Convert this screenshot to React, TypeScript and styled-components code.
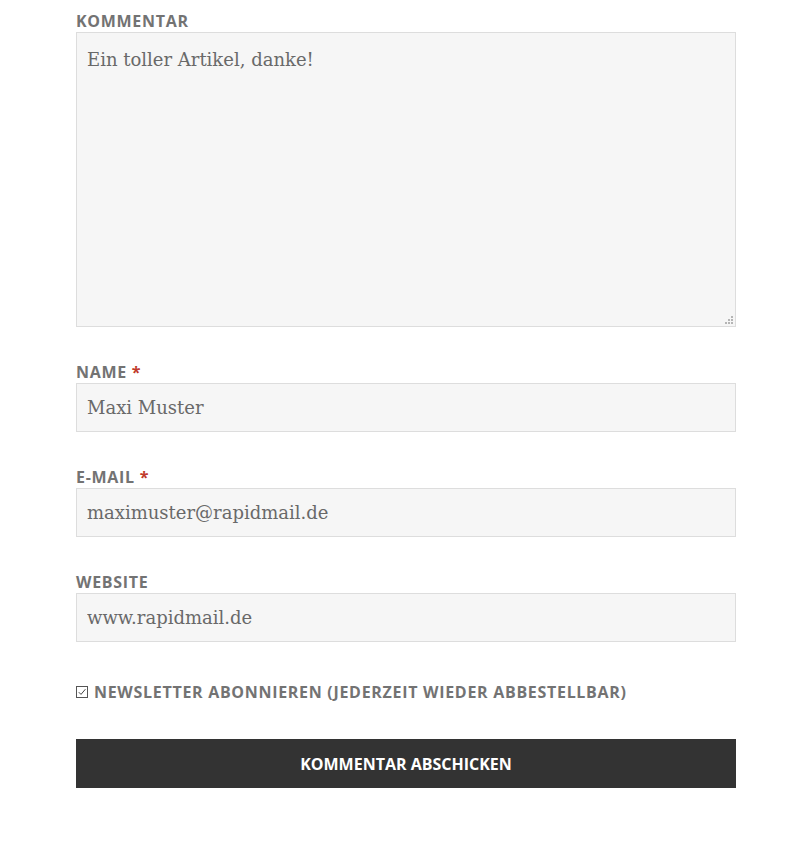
import React from "react"
import styled, { createGlobalStyle } from "styled-components"

const GlobalStyle = createGlobalStyle`
  html, body {
    margin: 0;
    padding: 0;
    background: #ffffff;
  }
`

const grip = [
  [6, 0],
  [3, 3],
  [6, 3],
  [0, 6],
  [3, 6],
  [6, 6],
]

export default function App() {
  return (
    <>
      <GlobalStyle />
      <Form onSubmit={(e) => e.preventDefault()}>
        <Field>
          <Label htmlFor="comment">Kommentar</Label>
          <AreaWrap>
            <TextArea id="comment" defaultValue="Ein toller Artikel, danke!" />
            <Grip width="8" height="8" viewBox="0 0 8 8" aria-hidden>
              {grip.map(([x, y]) => (
                <rect key={`${x}-${y}`} x={x} y={y} width="2" height="2" fill="#b5b5b5" />
              ))}
            </Grip>
          </AreaWrap>
        </Field>
        <Field>
          <Label htmlFor="author">
            Name <Required>*</Required>
          </Label>
          <Input id="author" type="text" defaultValue="Maxi Muster" />
        </Field>
        <Field>
          <Label htmlFor="email">
            E-Mail <Required>*</Required>
          </Label>
          <Input id="email" type="text" defaultValue="maximuster@rapidmail.de" />
        </Field>
        <Field>
          <Label htmlFor="url">Website</Label>
          <Input id="url" type="text" defaultValue="www.rapidmail.de" />
        </Field>
        <CheckRow>
          <CheckBox aria-hidden>
            <svg width="10" height="10" viewBox="0 0 10 10">
              <path d="M1.8 5.2 L4 7.4 L8.4 2.2" fill="none" stroke="#444" strokeWidth="1" />
            </svg>
          </CheckBox>
          <CheckLabel>Newsletter abonnieren (jederzeit wieder abbestellbar)</CheckLabel>
        </CheckRow>
        <SubmitButton type="submit">Kommentar abschicken</SubmitButton>
      </Form>
    </>
  )
}

const Form = styled.form`
  width: 660px;
  margin: 0 0 0 76px;
  padding-top: 11px;
  display: flex;
  flex-direction: column;
`
const Field = styled.div`
  display: flex;
  flex-direction: column;
  margin-bottom: 35px;
`
const Label = styled.label`
  font-family: "Open Sans", sans-serif;
  font-size: 16px;
  font-weight: 700;
  line-height: 20px;
  letter-spacing: 0.7px;
  text-transform: uppercase;
  color: #737373;
  margin-bottom: 1px;
`
const Required = styled.span`
  color: #c0392b;
`
const AreaWrap = styled.div`
  position: relative;
  display: flex;
`
const Grip = styled.svg`
  position: absolute;
  right: 3px;
  bottom: 3px;
  pointer-events: none;
`
const baseField = `
  box-sizing: border-box;
  width: 100%;
  margin: 0;
  background: #f6f6f6;
  border: 1px solid #dddddd;
  border-radius: 0;
  font-family: "DejaVu Serif", serif;
  font-size: 18px;
  color: #696969;
  outline: none;
`
const TextArea = styled.textarea`
  ${baseField}
  height: 295px;
  padding: 14px 10px 13px;
  line-height: 26px;
  resize: none;
`
const Input = styled.input`
  ${baseField}
  height: 49px;
  padding: 0 10px;
`
const CheckRow = styled.div`
  display: flex;
  align-items: center;
  gap: 6px;
  margin-top: 5px;
  margin-bottom: 37px;
`
const CheckBox = styled.span`
  box-sizing: border-box;
  width: 12px;
  height: 12px;
  border: 1px solid #555;
  display: flex;
  align-items: center;
  justify-content: center;
  background: #fff;
`
const CheckLabel = styled.span`
  font-family: "Open Sans", sans-serif;
  font-size: 16px;
  font-weight: 700;
  line-height: 20px;
  letter-spacing: 0.7px;
  text-transform: uppercase;
  color: #737373;
`
const SubmitButton = styled.button`
  height: 49px;
  width: 100%;
  border: none;
  background: #333333;
  color: #ffffff;
  font-family: "Open Sans", sans-serif;
  font-size: 16px;
  font-weight: 700;
  text-transform: uppercase;
  cursor: pointer;
`
